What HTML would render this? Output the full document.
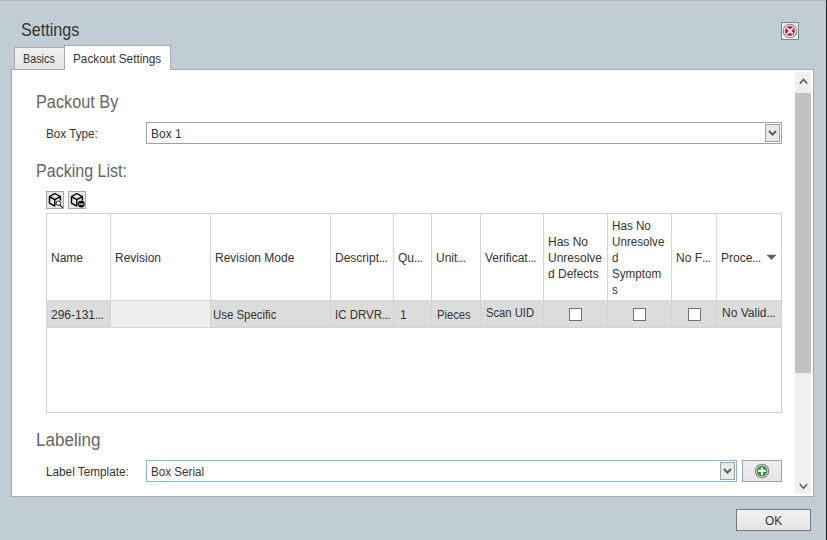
<!DOCTYPE html>
<html><head><meta charset="utf-8">
<style>
*{box-sizing:border-box;margin:0;padding:0}
html,body{width:827px;height:540px;overflow:hidden;background:#c1cdd5;font-family:"Liberation Sans",sans-serif;color:#222}
div,svg{position:absolute}
.e{letter-spacing:-0.6px}
.t{white-space:nowrap;font-size:12px;line-height:16px;color:#333;transform-origin:0 0}
.h{white-space:nowrap;font-size:17.5px;line-height:20px;color:#666;transform-origin:0 0}
.vl{width:1px;background:#d4d4d4}
.cb{width:13px;height:13px;border:1px solid #707070;background:#fff}
</style></head><body>
<div id="topline" style="left:0;top:0;width:827px;height:1px;background:#b9b8b6"></div>
<div id="rl1" style="left:825px;top:0;width:1px;height:540px;background:#c4c4c4"></div>
<div id="rl2" style="left:826px;top:0;width:1px;height:540px;background:#262626"></div>

<div id="title" class="h" style="left:21px;top:19px;font-size:19px;line-height:22px;color:#333;transform:scaleX(0.85)">Settings</div>

<svg id="closebtn" style="left:781px;top:22px" width="18" height="18" viewBox="0 0 18 18">
 <rect x="0.5" y="0.5" width="17" height="17" fill="#f0f0f0" stroke="#7d848a"/>
 <circle cx="9" cy="9" r="6.8" fill="none" stroke="#858585" stroke-width="1.05"/>
 <circle cx="9" cy="9" r="4.7" fill="#e8102e" stroke="#5a5a5a" stroke-width="0.8"/>
 <path d="M6.2 6.2 L11.8 11.8 M11.8 6.2 L6.2 11.8" stroke="#fff" stroke-width="1.9"/>
</svg>

<!-- panel -->
<div id="panel" style="left:11px;top:69px;width:803px;height:428px;background:#fff;border:1px solid #a9a9a9"></div>
<!-- tabs -->
<div id="tab1" style="left:14px;top:47px;width:51px;height:23px;border:1px solid #a9a9a9;background:linear-gradient(#f0f0f0,#e6e6e6)"></div>
<div id="tab2" style="left:64px;top:45px;width:107px;height:25px;border:1px solid #a9a9a9;border-bottom:none;background:#fff"></div>
<div class="t" id="tx_basics" style="left:23px;top:51px;transform:scaleX(0.9)">Basics</div>
<div class="t" id="tx_packout" style="left:73px;top:51px;transform:scaleX(0.98)">Packout Settings</div>

<!-- scrollbar -->
<div id="sb" style="left:795px;top:72px;width:16px;height:422px;background:#f0f0f0"></div>
<div id="thumb" style="left:795px;top:93px;width:16px;height:280px;background:#c2c2c2"></div>
<svg id="sbup" style="left:795px;top:72px" width="16" height="20" viewBox="0 0 16 20"><path d="M4.8 11.6 L8.5 7.4 L12.2 11.6" fill="none" stroke="#606060" stroke-width="1.6"/></svg>
<svg id="sbdn" style="left:795px;top:476px" width="16" height="18" viewBox="0 0 16 18"><path d="M4.8 8 L8.5 12.2 L12.2 8" fill="none" stroke="#606060" stroke-width="1.6"/></svg>

<!-- Packout By -->
<div class="h" id="h1" style="left:36px;top:92px;transform:scaleX(0.93)">Packout By</div>
<div class="t" id="l1" style="left:46px;top:126px;transform:scaleX(0.976)">Box Type:</div>
<div id="c1" style="left:146px;top:122px;width:636px;height:22px;border:1px solid #a0a0a0;background:#fff"></div>
<div class="t" id="c1t" style="left:151px;top:126px">Box 1</div>
<div id="c1b" style="left:765px;top:124px;width:15px;height:18px;border:1px solid #a0a0a0;background:#e9e9e9"></div>
<svg style="left:765px;top:124px" width="15" height="18" viewBox="0 0 15 18"><path d="M4 7 L7.5 10.6 L11 7" fill="none" stroke="#555" stroke-width="1.8"/></svg>

<!-- Packing List -->
<div class="h" id="h2" style="left:36px;top:161px;transform:scaleX(0.917)">Packing List:</div>
<svg id="ic1" style="left:46px;top:191px" width="18" height="18" viewBox="0 0 18 18">
 <rect x="0.5" y="0.5" width="17" height="17" fill="#e6e6e6" stroke="#a8a8a8"/>
 <path d="M8.8 2.5 L14.4 5.7 L14.4 9.6 M8.8 2.5 L3.5 5.6 L3.5 12.2 L8.8 15.2 M3.5 5.6 L8.8 8.6 L14.4 5.7 M8.8 8.6 L8.8 15.2" fill="none" stroke="#000" stroke-width="1.4" stroke-linejoin="round"/>
 <circle cx="12.3" cy="12.2" r="2.2" fill="#f4f4f4" stroke="#111" stroke-width="0.9"/>
 <path d="M13.8 13.8 L16.9 16.9" stroke="#111" stroke-width="1.1"/>
</svg>
<svg id="ic2" style="left:68px;top:191px" width="18" height="18" viewBox="0 0 18 18">
 <rect x="0.5" y="0.5" width="17" height="17" fill="#e6e6e6" stroke="#a8a8a8"/>
 <path d="M8.8 2.5 L14.4 5.7 L14.4 9.6 M8.8 2.5 L3.5 5.6 L3.5 12.2 L8.8 15.2 M3.5 5.6 L8.8 8.6 L14.4 5.7 M8.8 8.6 L8.8 15.2" fill="none" stroke="#000" stroke-width="1.4" stroke-linejoin="round"/>
 <circle cx="13.3" cy="13.1" r="3.4" fill="#000"/>
 <rect x="10.9" y="12.6" width="4.8" height="1.1" fill="#fff"/>
</svg>

<!-- grid -->
<div id="grid" style="left:46px;top:213px;width:736px;height:200px;border:1px solid #cfcfcf;background:#fff"></div>
<div id="rowbg" style="left:47px;top:300px;width:734px;height:28px;background:#dcdcdc;border-top:1px solid #d2d2d2;border-bottom:1px solid #d2d2d2"></div>
<div id="revcell" style="left:111px;top:301px;width:99px;height:26px;background:#efefef"></div>
<div class="vl" style="left:110px;top:214px;height:113px"></div>
<div class="vl" style="left:210px;top:214px;height:113px"></div>
<div class="vl" style="left:330px;top:214px;height:113px"></div>
<div class="vl" style="left:393px;top:214px;height:113px"></div>
<div class="vl" style="left:431px;top:214px;height:113px"></div>
<div class="vl" style="left:480px;top:214px;height:113px"></div>
<div class="vl" style="left:543px;top:214px;height:113px"></div>
<div class="vl" style="left:607px;top:214px;height:113px"></div>
<div class="vl" style="left:671px;top:214px;height:113px"></div>
<div class="vl" style="left:716px;top:214px;height:113px"></div>

<div class="t" style="left:51px;top:250px">Name</div>
<div class="t" style="left:115px;top:250px">Revision</div>
<div class="t" style="left:215px;top:250px">Revision Mode</div>
<div class="t" style="left:335px;top:250px">Descript<span class="e">...</span></div>
<div class="t" style="left:398px;top:250px">Qu<span class="e">...</span></div>
<div class="t" style="left:436px;top:250px">Unit<span class="e">...</span></div>
<div class="t" style="left:485px;top:250px">Verificat<span class="e">...</span></div>
<div class="t" style="left:548px;top:234px">Has No<br>Unresolve<br>d Defects</div>
<div class="t" style="left:612px;top:218px;transform:scaleX(0.97)">Has No<br>Unresolve<br>d<br>Symptom<br>s</div>
<div class="t" style="left:676px;top:250px">No F<span class="e">...</span></div>
<div class="t" style="left:721px;top:250px">Proce<span class="e">...</span></div>
<svg style="left:766px;top:254px" width="11" height="7" viewBox="0 0 11 7"><path d="M0.5 0.8 L10.5 0.8 L5.5 6 Z" fill="#606060"/></svg>

<div class="t" style="left:51px;top:307px">296-131<span class="e">...</span></div>
<div class="t" style="left:213px;top:307px;transform:scaleX(0.95)" >Use Specific</div>
<div class="t" style="left:335px;top:307px;transform:scaleX(0.955)">IC DRVR<span class="e">...</span></div>
<div class="t" style="left:400px;top:307px">1</div>
<div class="t" style="left:437px;top:307px;transform:scaleX(0.935)">Pieces</div>
<div class="t" style="left:486px;top:305px;transform:scaleX(0.935)">Scan UID</div>
<div class="cb" style="left:569px;top:308px"></div>
<div class="cb" style="left:633px;top:308px"></div>
<div class="cb" style="left:688px;top:308px"></div>
<div class="t" style="left:722px;top:305px">No Valid<span class="e">...</span></div>

<!-- Labeling -->
<div class="h" id="h3" style="left:36px;top:430px;transform:scaleX(0.975)">Labeling</div>
<div class="t" id="l2" style="left:46px;top:464px;transform:scaleX(0.98)">Label Template:</div>
<div id="c2" style="left:146px;top:460px;width:591px;height:22px;border:1px solid #88b5dc;background:#fff"></div>
<div class="t" id="c2t" style="left:151px;top:464px;transform:scaleX(0.97)">Box Serial</div>
<div id="c2b" style="left:720px;top:462px;width:15px;height:18px;border:1px solid #a0a0a0;background:#e9e9e9"></div>
<svg style="left:720px;top:462px" width="15" height="18" viewBox="0 0 15 18"><path d="M4 7 L7.5 10.6 L11 7" fill="none" stroke="#555" stroke-width="1.8"/></svg>
<div id="addbtn" style="left:742px;top:460px;width:40px;height:22px;border:1px solid #a0a0a0;background:linear-gradient(#f0f0f0,#e5e5e5)"></div>
<svg style="left:754px;top:463px" width="16" height="16" viewBox="0 0 16 16">
 <circle cx="8" cy="8" r="6.7" fill="none" stroke="#858585" stroke-width="1.1"/>
 <circle cx="8" cy="8" r="5" fill="#1f9a2a" stroke="#3d6b40" stroke-width="0.6"/>
 <path d="M8 4.2 L8 11.8 M4.2 7.9 L11.8 7.9" stroke="#fff" stroke-width="2.1"/>
</svg>

<!-- OK -->
<div id="okbtn" style="left:736px;top:509px;width:75px;height:22px;border:1px solid #787878;background:linear-gradient(#f0f0f0,#e5e5e5)"></div>
<div class="t" id="oktx" style="left:765px;top:513px;font-size:12.5px;transform:scaleX(0.95)">OK</div>
</body></html>
